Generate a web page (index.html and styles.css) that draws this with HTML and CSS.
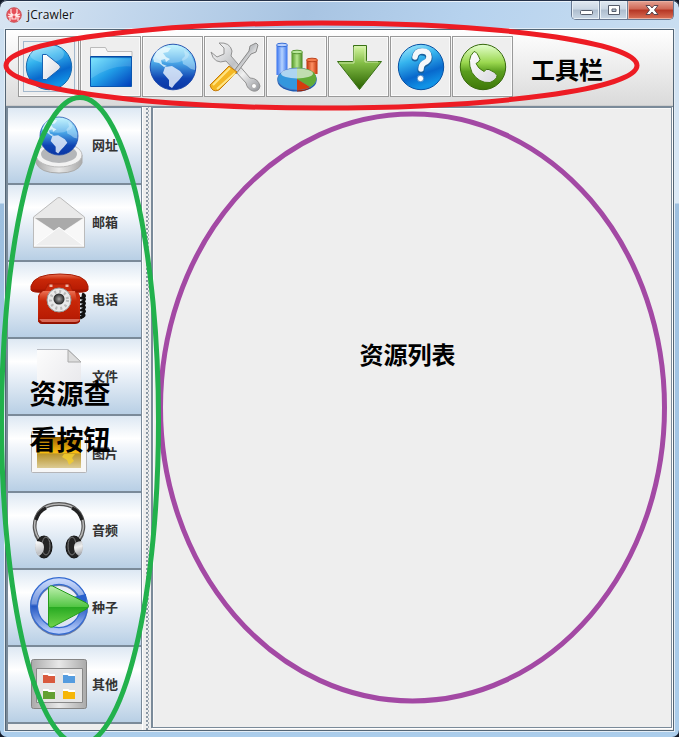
FILE: index.html
```html
<!DOCTYPE html>
<html lang="zh-CN">
<head>
<meta charset="utf-8">
<title>jCrawler</title>
<link rel="stylesheet" href="styles.css">
</head>
<body>
<svg class="defs" width="0" height="0" aria-hidden="true">
  <defs>
    <linearGradient id="blue" x1="0" y1="0" x2="0.35" y2="1"><stop offset="0" stop-color="#b8f3ff"/><stop offset=".4" stop-color="#35b4ee"/><stop offset=".75" stop-color="#0868cc"/><stop offset="1" stop-color="#1193e6"/></linearGradient>
    <linearGradient id="folder" x1="0" y1="0" x2="1" y2="1"><stop offset="0" stop-color="#72e6ff"/><stop offset=".5" stop-color="#209be6"/><stop offset="1" stop-color="#003cba"/></linearGradient>
    <linearGradient id="globe" x1="0" y1="0" x2="0" y2="1"><stop offset="0" stop-color="#b5f4ff"/><stop offset=".4" stop-color="#4ba8e8"/><stop offset=".75" stop-color="#1045b3"/><stop offset="1" stop-color="#0a36a5"/></linearGradient>
    <linearGradient id="green" x1="0" y1="0" x2="0" y2="1"><stop offset="0" stop-color="#e5ffd0"/><stop offset=".4" stop-color="#9bd850"/><stop offset=".6" stop-color="#5a9e1e"/><stop offset="1" stop-color="#3e7708"/></linearGradient>
    <linearGradient id="arrow" x1="0" y1="0" x2="0" y2="1"><stop offset="0" stop-color="#d8f8a6"/><stop offset=".4" stop-color="#83bd46"/><stop offset="1" stop-color="#286000"/></linearGradient>
    <linearGradient id="silver" x1="0" y1="0" x2="1" y2="1"><stop offset="0" stop-color="#fff"/><stop offset=".45" stop-color="#bfc1c4"/><stop offset=".65" stop-color="#f0f0f0"/><stop offset="1" stop-color="#909399"/></linearGradient>
    <linearGradient id="white" x1="0" y1="0" x2="1" y2="1"><stop offset="0" stop-color="#fff"/><stop offset="1" stop-color="#d8d8df"/></linearGradient>
    <linearGradient id="barBlue"><stop offset="0" stop-color="#3470ef"/><stop offset=".5" stop-color="#b6d4ff"/><stop offset="1" stop-color="#3974ee"/></linearGradient>
    <linearGradient id="barGreen"><stop offset="0" stop-color="#4f9323"/><stop offset=".5" stop-color="#b8e891"/><stop offset="1" stop-color="#43851b"/></linearGradient>
    <linearGradient id="barRed"><stop offset="0" stop-color="#bd3006"/><stop offset=".5" stop-color="#ff9365"/><stop offset="1" stop-color="#bf3207"/></linearGradient>
    <linearGradient id="red" x1="0" y1="0" x2="0" y2="1"><stop offset="0" stop-color="#ec7254"/><stop offset=".3" stop-color="#c92808"/><stop offset=".8" stop-color="#b91c03"/><stop offset="1" stop-color="#8d1000"/></linearGradient>
    <linearGradient id="play" x1="0" y1="0" x2="0" y2="1"><stop offset="0" stop-color="#c0f0b0"/><stop offset=".5" stop-color="#54c645"/><stop offset=".52" stop-color="#28aa22"/><stop offset="1" stop-color="#71d44c"/></linearGradient>
    <linearGradient id="ring" x1="0" y1="0" x2="0" y2="1"><stop offset="0" stop-color="#c4d5fa"/><stop offset=".45" stop-color="#7696dc"/><stop offset=".5" stop-color="#2457c3"/><stop offset="1" stop-color="#b5cbfa"/></linearGradient>
    <linearGradient id="gold" x1="0" y1="0" x2="0" y2="1"><stop offset="0" stop-color="#9d6500"/><stop offset=".5" stop-color="#f9bd10"/><stop offset=".55" stop-color="#b8942e"/><stop offset="1" stop-color="#dccb94"/></linearGradient>
    <linearGradient id="metal" x1="0" y1="0" x2="1" y2="0"><stop offset="0" stop-color="#aaa"/><stop offset=".5" stop-color="#e8e8e8"/><stop offset="1" stop-color="#aaa"/></linearGradient>
    <radialGradient id="dial"><stop offset="0" stop-color="#aaa"/><stop offset="1" stop-color="#222"/></radialGradient>
    <symbol id="earth" viewBox="0 0 48 48">
      <circle cx="24" cy="24" r="22.8" fill="url(#globe)" stroke="#1744a8" stroke-width=".9"/>
      <path d="M4 15 8 8 15 4 22 5 19 9 14 10 17 14 21 16 17 19 16 16 12 17 13 21 18 23 15 24 10 20 5 19Z" fill="#eafaff" opacity=".8"/>
      <path d="M16 24 23 23 31 28 34 32 30 37 26 41 23 45 20 43 20 37 14 30Z" fill="#e4edfb" opacity=".85"/>
      <path d="M35 7 42 12 46 21 46 27 42 26 38 23 34 21 33 16 36 13Z" fill="#d0efff" opacity=".45"/>
      <ellipse cx="23" cy="11" rx="17" ry="9" fill="#fff" opacity=".24"/>
    </symbol>
  </defs>
</svg>

<div class="window">
  <header class="titlebar">
    <svg class="logo" viewBox="0 0 16 16"><circle cx="8" cy="8" r="7.3" fill="#e65059" stroke="#c95c61"/><path d="M5 2v4l2 2-3 2v4M11 2v4L9 8l3 2v4M2 7l4 1-4 2M14 7l-4 1 4 2M6 8h4v4H6z" fill="none" stroke="#ffe9e9" stroke-width="1.2"/></svg>
    <h1 class="title">jCrawler</h1>
    <div class="controls">
      <span class="control"><svg viewBox="0 0 28 18"><rect x="8.5" y="9.5" width="12" height="4" rx="1" fill="#fff" stroke="#555c6a"/></svg></span>
      <span class="control"><svg viewBox="0 0 28 18"><path d="M8.500 4.500h11v9h-11zM12 8v2.500h4V8z" fill="#fff" fill-rule="evenodd" stroke="#555c6a"/></svg></span>
      <span class="control close"><svg viewBox="0 0 46 18"><path d="M18 4.500h4l2 2.500 2-2.500h4L26.500 9l3.500 4.500h-4L24 11l-2 2.500h-4L21.500 9z" fill="#fff" stroke="#59464f"/></svg></span>
    </div>
  </header>

  <main class="content">
    <nav class="toolbar">
      <button class="tool focused"><svg viewBox="0 0 60 60"><circle cx="30" cy="30" r="22.7" fill="url(#blue)" stroke="#176aae"/><ellipse cx="28" cy="17" rx="17" ry="9" fill="#fff" opacity=".2"/><path d="M23.500 17.500h4L40.500 28q2 2 0 4L27.500 42.500h-4z" fill="url(#white)" stroke="#1763b3"/></svg></button>
      <button class="tool"><svg viewBox="0 0 60 60"><path d="M9.500 20V10.500h15l2 4h24.500V20z" fill="#f7f7f7" stroke="#bbb"/><path d="M9.500 19.500h41v30h-41z" fill="url(#folder)" stroke="#0a56af"/><path d="M10 20h40" stroke="#003f99"/><path d="M10 21.500h40v8q-20-2-40 12z" fill="#fff" opacity=".13"/></svg></button>
      <button class="tool"><svg viewBox="0 0 60 60"><use href="#earth" x="6" y="6" width="48" height="48"/></svg></button>
      <button class="tool"><svg viewBox="0 0 60 60"><path d="M6 15 12 20 19 17 19 11 14 6Q25 5 27 14L26 19 45 41Q53 41 55 49 54 55 48 54 42 52 41 46L21 24Q9 28 6 15Z" fill="url(#silver)" stroke="#929292"/><circle cx="49" cy="49" r="2.500" fill="#fff" stroke="#aaa"/><path d="m29 34 15-20 1-5 6-3 2 2-2 7-5 2-15 20z" fill="url(#silver)" stroke="#888"/><path d="M24 29 32 35 14 53Q7 56 5 48Z" fill="#f4b723" stroke="#c57b0a"/><path d="m8 48 17-17M12 52l18-16" stroke="#ffe584" stroke-width="2"/></svg></button>
      <button class="tool"><svg viewBox="0 0 60 60"><path d="M9.500 8v30h11V8z" fill="url(#barBlue)"/><ellipse cx="15" cy="8" rx="5.500" ry="1.800" fill="#b9d1fe" stroke="#376ed6"/><path d="M24.500 15v20h11V15z" fill="url(#barGreen)"/><ellipse cx="30" cy="15" rx="5.500" ry="1.800" fill="#b9e79a" stroke="#579632"/><path d="M39.500 23v14h11V23z" fill="url(#barRed)"/><ellipse cx="45" cy="23" rx="5.500" ry="1.800" fill="#f37b4c" stroke="#bd421b"/><ellipse cx="30" cy="44" rx="19.500" ry="10.500" fill="#1b59b2"/><path d="M30 44v10.500q9 0 14-4z" fill="#9f2205"/><path d="m43 50q6-3 6.500-8z" fill="#397b17"/><ellipse cx="30" cy="42" rx="19.500" ry="11" fill="#3397dd" stroke="#4d75bc" stroke-width=".8"/><path d="M30 42V31Q49 31 49.500 42 48 48 43 50Z" fill="#61ab37"/><path d="M30 42 43 50Q38 53 30 53Z" fill="#d43c0d"/><ellipse cx="30" cy="36.500" rx="16" ry="5" fill="#fff" opacity=".6"/></svg></button>
      <button class="tool"><svg viewBox="0 0 60 60"><path d="M24.500 8.500h13v15q0 1 1 1H52.500L30.500 52.500 8.500 24.500H23.500q1 0 1-1z" fill="url(#arrow)" stroke="#397116"/><path d="M26 10h10v15h13M10 26h15V10" fill="none" stroke="#d9efb9" opacity=".8"/></svg></button>
      <button class="tool"><svg viewBox="0 0 60 60"><circle cx="30" cy="30" r="22.7" fill="url(#blue)" stroke="#0750a3"/><path d="M24 21q1-7 7-6 7 0 7 6 0 4-5 6-3 2-3 6" fill="none" stroke="#18619f" stroke-width="7" stroke-linecap="round"/><path d="M24 20q1-6 7-6 7 0 7 6 0 4-5 6-3 2-3 6" fill="none" stroke="#f5f7fa" stroke-width="5.500" stroke-linecap="round"/><circle cx="29.500" cy="41.500" r="3.200" fill="#fff" stroke="#4686c5"/></svg></button>
      <button class="tool"><svg viewBox="0 0 60 60"><circle cx="30" cy="30" r="22.700" fill="url(#green)" stroke="#37690d"/><path d="M21 14.500q3 0 6 8-1 3-4 4 2 5 8 8 2-3 5-2 7 3 8 6 0 4-7 7-11 1-18-10Q13 22 21 14.500Z" fill="url(#white)" stroke="#427911"/></svg></button>
    </nav>

    <div class="split">
      <aside class="sidebar">
        <button class="category"><svg viewBox="0 0 64 75"><path d="M9 47v8q4 10 23 10 19 0 23-10v-8" fill="url(#metal)" stroke="#aaa"/><ellipse cx="32" cy="47" rx="23" ry="12" fill="#f2f2f2" stroke="#bbb"/><ellipse cx="32" cy="46" rx="18" ry="9" fill="#b4b6b9"/><use href="#earth" x="12" y="8" width="40" height="40"/></svg><span>网址</span></button>
        <button class="category"><svg viewBox="0 0 64 75"><path d="m6.500 32 24-19q1.500-1 3 0l24 19v30h-51z" fill="#e9e9e9" stroke="#bbb"/><path d="M8 33h48L32 49z" fill="#aaa"/><path d="m7 33 20 13L7 61zm50 0L37 46l20 15z" fill="#f8f8f8"/><path d="m7 61 24-18q1-1 2 0l24 18z" fill="#eee" stroke="#fff"/><path d="M6.500 32v30.500h51V32" fill="none" stroke="#bbb"/></svg><span>邮箱</span></button>
        <button class="category"><svg viewBox="0 0 64 75"><path d="M55 32q5 2 0 4 5 1 0 4 5 1 0 4 5 1 0 4 5 1 0 4 5 1-2 4" fill="none" stroke="#111" stroke-width="3"/><path d="M21 16h24l8 18v26H11V34z" fill="#c8290c"/><path d="M24 17v8M40 17v8" stroke="#efb5a5" stroke-width="3"/><path d="M4 28V24q3-12 29-12t28 12v4q-2 3-15 2l-3-8H21l-4 8q-11 1-13-2z" fill="url(#red)" stroke="#a71d06"/><path d="M16 29h32l5 26v4q-1 3-5 3H15q-4 0-4-5l2-25z" fill="url(#red)"/><path d="M12 57h41q-1 3-5 3H15z" fill="#d86856"/><circle cx="32" cy="38" r="12" fill="#e9e9e9" stroke="#999"/><circle cx="32" cy="38" r="8.500" fill="none" stroke="#bbb" stroke-width="3" stroke-dasharray="2 3"/><circle cx="32" cy="37" r="5.500" fill="url(#dial)"/></svg><span>电话</span></button>
        <button class="category"><svg viewBox="0 0 64 75"><path d="M10 10.500h31L54 23v39H10z" fill="#f8f8f8"/><path d="M10 10.500h31L54 23v39H10z" fill="url(#white)" opacity=".6"/><path d="M10 10.500h31L54 23" fill="none" stroke="#b9bdc4"/><path d="M41 11v12h13z" fill="#ddd" stroke="#aaa"/></svg><span>文件</span></button>
        <button class="category"><svg viewBox="0 0 64 75"><rect x="4.500" y="15.500" width="55" height="41" rx="1" fill="#f7f7f7" stroke="#b5b5b8"/><path d="M10 21h44v31H10z" fill="url(#gold)"/><path d="M37 38h11l-3 4 2 3-5 4-2-5-5-3z" fill="#f5ce2c" opacity=".8"/></svg><span>图片</span></button>
        <button class="category"><svg viewBox="0 0 64 75"><path d="M12 47C3 35 7 11 32 11s29 24 20 36" fill="none" stroke="#555" stroke-width="3.800"/><path d="M12 46C3 34 7 11 32 11s29 24 20 35" fill="none" stroke="#b8b8b8" stroke-width="1.500"/><path d="M9 27q3-9 10-12M45 15q7 3 10 12" fill="none" stroke="#222" stroke-width="3.500"/><ellipse cx="17" cy="54" rx="8" ry="11" fill="#242424" stroke="#111"/><ellipse cx="19" cy="53" rx="4" ry="9" fill="none" stroke="#777"/><ellipse cx="47" cy="54" rx="8" ry="11" fill="#242424" stroke="#111"/><ellipse cx="45" cy="53" rx="4" ry="9" fill="none" stroke="#777"/><path d="M9 48q8 0 8 6t-5 9q-6-4-3-15zm46 0q-8 0-8 6t5 9q6-4 3-15z" fill="url(#silver)"/></svg><span>音频</span></button>
        <button class="category"><svg viewBox="0 0 64 75"><circle cx="32" cy="37" r="25" fill="#e1e5f3" fill-opacity=".6" stroke="#7480a0" stroke-width="8"/><circle cx="32" cy="36" r="25" fill="none" stroke="#356bd0" stroke-width="8"/><circle cx="32" cy="36" r="25" fill="none" stroke="url(#ring)" stroke-width="5.500"/><path d="m46 27 13-3v9z" fill="#2860cc"/><path d="M21.500 19q0-4 4-3l34 17q4 3 0 6l-34 18q-4 1-4-3z" fill="url(#play)" stroke="#259b1b"/></svg><span>种子</span></button>
        <button class="category"><svg viewBox="0 0 64 75"><rect x="4.500" y="12.500" width="55" height="49" rx="2" fill="url(#metal)" stroke="#858585"/><path d="M9.500 21.500h46v34h-46z" fill="#e5e5e5" stroke="#888"/><path d="M16 27h12v9H16z" fill="#d95a3d"/><path d="M36 27h12v9H36z" fill="#559cdf"/><path d="M16 43h12v9H16z" fill="#63a032"/><path d="M36 43h12v9H36z" fill="#f6b607"/><path d="M16 27h5l1 1h6M36 27h5l1 1h6M16 43h5l1 1h6M36 43h5l1 1h6" fill="none" stroke="#fff" stroke-width="2"/></svg><span>其他</span></button>
      </aside>
      <div class="divider"></div>
      <section class="resources"></section>
    </div>
  </main>

  <svg class="rings" viewBox="0 0 679 737" fill="none" stroke-width="5">
    <ellipse cx="412.500" cy="407.500" rx="252" ry="293.500" stroke="#a349a4"/>
    <ellipse cx="321.500" cy="65.500" rx="315.500" ry="42.500" stroke="#ed1c24"/>
    <ellipse cx="80" cy="421" rx="78.500" ry="323.500" stroke="#22b14c"/>
  </svg>
  <div class="note note-toolbar">工具栏</div>
  <div class="note note-side">资源查<br>看按钮</div>
  <div class="note note-list">资源列表</div>
</div>
</body>
</html>
```

FILE: styles.css
```css
* { box-sizing: border-box; }
body { margin: 0; overflow: hidden; background: #111827; }
.defs { position: absolute; }
button { appearance: none; padding: 0; border: 0; margin: 0; }

.window {
  position: relative;
  display: flex;
  flex-direction: column;
  width: 679px;
  height: 737px;
  padding: 1px 5px 6px;
  overflow: hidden;
  border-radius: 7px;
  background:
    linear-gradient(110deg, #d8e5f2 0, #c1d6ec 20%, #a8c4e2 45%, #b6d2ee 68%, #c9def1 100%) 0 0 / 100% 29px no-repeat,
    linear-gradient(#c9ddef 0, #dceaf7 203px, #9dbfdf 204px, #abcdeb 100%);
  box-shadow: inset 0 1px #253249, inset 0 2px #eaf2fa;
}

.titlebar { display: flex; flex: 0 0 28px; align-items: flex-start; }
.logo { width: 16px; height: 16px; margin: 6px 5px 0 1px; }
.title { margin: 6px 0 0; color: #111; font: 400 12px/16px "Open Sans", sans-serif; letter-spacing: .1px; text-shadow: 0 0 5px #fff; }
.controls {
  display: flex;
  width: 103px;
  height: 19px;
  margin-left: auto;
  border: 1px solid #687891;
  border-top: 0;
  border-radius: 0 0 5px 5px;
  overflow: hidden;
}
.control { width: 28px; border-right: 1px solid #738399; background: linear-gradient(#e1e9f1, #cad6e3 45%, #aebdce 50%, #cad8e6); box-shadow: inset 0 0 0 1px #e9f0f6; }
.control svg { display: block; height: 18px; }
.close { width: 46px; border: 0; background: linear-gradient(#e5a293, #cf6755 45%, #b53524 50%, #da7157); box-shadow: inset 0 0 0 1px #eab0a2; }

.content { display: flex; flex: 1; flex-direction: column; min-height: 0; border: 1px solid #536575; background: #eee; box-shadow: 0 0 0 1px #e3edf6; }
.toolbar { display: flex; flex: 0 0 76px; gap: 1px; padding: 6px 12px 0; border-bottom: 1px solid #ccc; background: linear-gradient(#fff, #dadada); }
.tool { width: 61px; height: 61px; border: 1px solid #999; background: #eee; box-shadow: inset 1px 1px #fafafa, inset -1px -1px #fafafa; }
.tool svg { display: block; width: 60px; height: 60px; margin: 0 -1px -1px 0; }
.focused { position: relative; }
.focused::after { position: absolute; inset: 4px 3px 4px 4px; border: 1px solid #a3b8cc; content: ""; }

.split { display: flex; flex: 1; min-height: 0; border-top: 1px solid #7a8a99; }
.sidebar { display: flex; flex-direction: column; width: 136px; border-left: 2px solid #7a8a99; border-top: 1px solid #7a8a99; }
.category {
  display: flex;
  flex: 0 0 77px;
  align-items: center;
  gap: 2px;
  padding-left: 19px;
  border-right: 1px solid #7a8a99;
  border-bottom: 2px solid #7a8a99;
  background: linear-gradient(#dde8f3 0, #fff 30%, #f5f8fc 38%, #b8cfe5 100%);
  color: #333;
  font: 700 13px/20px "Noto Sans CJK SC", sans-serif;
}
.category svg { flex: 0 0 64px; height: 75px; }
.category span { margin: -2px 0 0 -1px; }
.divider { width: 9px; border-left: 1px solid #fff; background: radial-gradient(circle, #8795a2 .7px, transparent .9px) 2px 0 / 4px 4px, radial-gradient(circle, #a0abb5 .7px, transparent .9px) 4px 2px / 4px 4px, #eee; background-clip: content-box; padding: 0 2px 0 3px; background-color: #eee; }
.resources { flex: 1; margin: 0 1px 2px 0; border: solid #7a8a99; border-width: 1px 1px 1px 2px; box-shadow: 1px 1px #fff, inset 1px 1px #f9f9f9; }

.rings { position: absolute; inset: 0; width: 679px; height: 737px; pointer-events: none; }
.note { position: absolute; color: #000; font-family: "Noto Sans CJK SC", sans-serif; font-weight: 700; white-space: nowrap; }
.note-toolbar { top: 51px; left: 531px; font-size: 24px; line-height: 36px; }
.note-side { top: 370px; left: 29.5px; font-size: 27px; line-height: 46px; }
.note-list { top: 336px; left: 359.5px; font-size: 24px; line-height: 36px; }
```
